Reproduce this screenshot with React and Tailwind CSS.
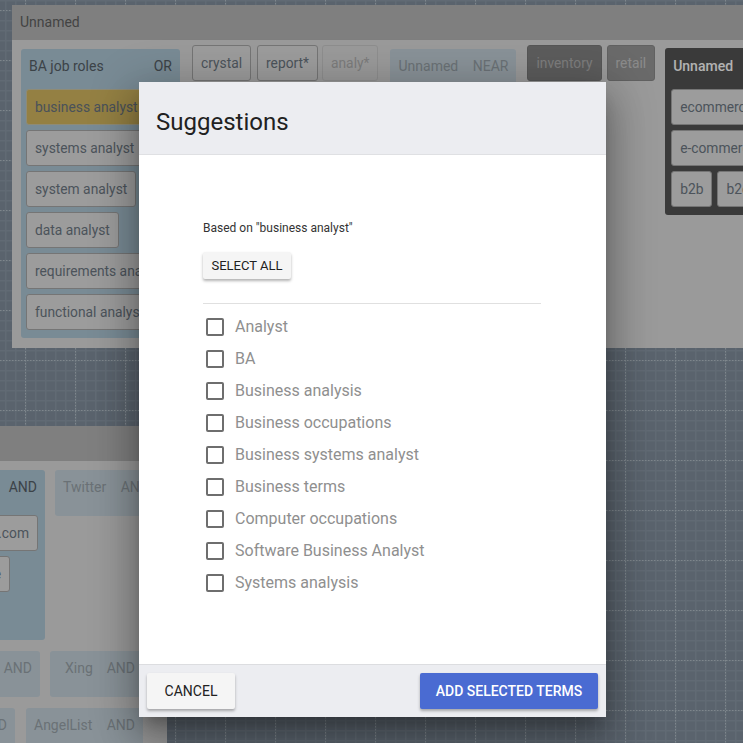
import React from 'react';

const suggestions = [
  'Analyst',
  'BA',
  'Business analysis',
  'Business occupations',
  'Business systems analyst',
  'Business terms',
  'Computer occupations',
  'Software Business Analyst',
  'Systems analysis',
];

// background grid of the canvas
function GridBackground() {
  return (
    <svg className="absolute inset-0 w-full h-full" xmlns="http://www.w3.org/2000/svg">
      <defs>
        <pattern id="minor" width="10" height="10" patternUnits="userSpaceOnUse">
          <rect x="5" y="0" width="1.5" height="10" fill="#8b99a6" />
          <rect x="0" y="0" width="10" height="1.5" fill="#8b99a6" />
        </pattern>
        <pattern id="dotsV" width="50" height="3" patternUnits="userSpaceOnUse">
          <rect x="25" y="0" width="1" height="1.5" fill="#b5c0c9" />
        </pattern>
        <pattern id="dotsH" width="3" height="50" patternUnits="userSpaceOnUse">
          <rect x="0" y="10" width="1.5" height="1" fill="#b5c0c9" />
        </pattern>
      </defs>
      <rect width="100%" height="100%" fill="#818f9c" />
      <rect width="100%" height="100%" fill="url(#minor)" />
      <rect width="100%" height="100%" fill="url(#dotsV)" />
      <rect width="100%" height="100%" fill="url(#dotsH)" />
    </svg>
  );
}

function Chip({ children, variant }) {
  let colors = 'bg-[#e0e0e0] border-[#a8a8a8] text-[#6d7883]';
  if (variant === 'yellow') colors = 'bg-[#d4b861] border-[#cdc8a8] text-[#6a7580]';
  if (variant === 'inventory') colors = 'bg-[#858585] border-[#7c7c7c] text-[#b4b4b4]';
  if (variant === 'retail') colors = 'bg-[#999999] border-[#8c8c8c] text-[#c8c8c8]';
  if (variant === 'faded') colors = 'bg-[#dddddd] border-[#cccccc] text-[#b2b2b2]';
  return (
    <div className={`h-9 px-2 border rounded-[3px] flex items-center text-[13.8px] whitespace-nowrap shrink-0 ${colors}`}>
      {children}
    </div>
  );
}

function GroupHead({ name, op, faded, white }) {
  let color = 'text-[#566067]';
  if (faded) color = 'text-[#99a3a9]';
  if (white) color = 'text-[#ffffff] font-medium';
  return (
    <div className={`flex justify-between text-sm h-[34px] items-center px-2 ${color}`}>
      <span>{name}</span>
      {op && <span>{op}</span>}
    </div>
  );
}

function FadedGroup({ name, op, className }) {
  return (
    <div className={`h-[46px] bg-[#c4d2da] rounded-[3px] ${className}`}>
      <GroupHead name={name} op={op} faded />
    </div>
  );
}

export default function App() {
  return (
    <div className="relative w-[743px] h-[743px] overflow-hidden font-['Roboto',sans-serif]">
      <GridBackground />

      {/* top panel */}
      <div className="absolute left-[12px] top-[5px] w-[900px] h-[343px] bg-[#dddddd]">
        <div className="h-[35px] bg-[#b7b7b7] px-2 pb-[2px] flex items-center text-sm text-[#616161]">Unnamed</div>
        <div className="flex pl-[9px] pt-[5px]">
          <div className="w-[159px] h-[289px] mt-1 bg-[#aec7d6] rounded-[3px] shrink-0 overflow-hidden">
            <GroupHead name="BA job roles" op="OR" />
            <div className="flex flex-col items-start gap-[5px] px-[5px] mt-[6px]">
              <Chip variant="yellow">business analyst</Chip>
              <Chip>systems analyst</Chip>
              <Chip>system analyst</Chip>
              <Chip>data analyst</Chip>
              <Chip>requirements analyst</Chip>
              <Chip>functional analyst</Chip>
            </div>
          </div>
          <div className="flex gap-[6px] ml-3 items-start">
            <Chip>crystal</Chip>
            <Chip>report*</Chip>
            <div className="-ml-[2px] mr-[1px]">
              <Chip variant="faded">analy*</Chip>
            </div>
          </div>
          <div className="w-[126px] h-[60px] mt-1 ml-[11px] bg-[#c4d2da] rounded-[3px] shrink-0">
            <GroupHead name="Unnamed" op="NEAR" faded />
          </div>
          <div className="flex gap-[5px] ml-[11px] items-start">
            <Chip variant="inventory">inventory</Chip>
            <Chip variant="retail">retail</Chip>
          </div>
          <div className="w-[200px] h-[167px] mt-[3px] ml-[10px] bg-[#535353] rounded-[3px] shrink-0">
            <div className="h-[36px] flex items-center">
              <div className="w-full">
                <GroupHead name="Unnamed" white />
              </div>
            </div>
            <div className="flex flex-wrap gap-[5px] px-[6px] mt-[5px] w-[140px]">
              <Chip>ecommerce</Chip>
              <Chip>e-commerce</Chip>
              <Chip>b2b</Chip>
              <Chip>b2c</Chip>
            </div>
          </div>
        </div>
      </div>

      {/* bottom panel, runs off the left edge */}
      <div className="absolute left-[-200px] top-[426px] w-[367px] h-[340px] bg-[#dddddd]">
        <div className="h-[35px] bg-[#b7b7b7]" />
        <div className="pl-[9px] pt-[9px] flex flex-col gap-[11px]">
          <div className="flex gap-[10px] items-start h-[170px]">
            <div className="w-[236px] h-[170px] bg-[#aec7d6] rounded-[3px] shrink-0">
              <GroupHead name="" op="AND" />
              <div className="flex flex-col items-end gap-[5px] mt-[11px] pr-[7px]">
                <Chip>companyname.com</Chip>
                <div className="mr-[28px]">
                  <Chip>name</Chip>
                </div>
              </div>
            </div>
            <FadedGroup name="Twitter" op="AND" className="w-[102px] shrink-0" />
          </div>
          <div className="flex gap-[10px]">
            <FadedGroup name="" op="AND" className="w-[231px] shrink-0" />
            <FadedGroup name="Xing" op="AND" className="w-[93px] shrink-0 pl-[7px]" />
          </div>
          <div className="flex gap-[11px]">
            <FadedGroup name="" op="AND" className="w-[206px] shrink-0" />
            <FadedGroup name="AngelList" op="AND" className="w-[117px] shrink-0" />
          </div>
        </div>
      </div>

      {/* dialog backdrop */}
      <div className="absolute inset-0 bg-black/30" />

      {/* dialog */}
      <div className="absolute left-[139px] top-[82px] w-[467px] h-[635px] flex flex-col bg-white rounded-[2px] shadow-[0_11px_15px_-7px_rgba(0,0,0,.25),0_24px_38px_3px_rgba(0,0,0,.2),0_9px_46px_8px_rgba(0,0,0,.2)]">
        <div className="h-[73px] shrink-0 bg-[#ecedf1] border-b border-[#dfe0e3] px-[17px] pt-2 flex items-center text-2xl text-[#212121]">
          Suggestions
        </div>
        <div className="flex-1 pl-[64px] pr-[65px] pt-[65px]">
          <p className="text-xs leading-[16px] text-[#333]">Based on "business analyst"</p>
          <button className="mt-[16px] h-[27px] w-[88px] bg-[#f5f5f5] rounded-[2px] text-[13px] text-[#212121] shadow-[0_2px_3px_rgba(0,0,0,.3)]">
            SELECT ALL
          </button>
          <div className="mt-[24px] border-t border-[#e0e0e0]" />
          <div className="mt-[7px] flex flex-col">
            {suggestions.map((s) => (
              <label key={s} className="h-[32px] flex items-center text-base text-[#8f8f8f]">
                <span className="w-[18px] h-[18px] ml-[3px] mr-[11px] border-2 border-[#6e6e6e] rounded-[2px]" />
                {s}
              </label>
            ))}
          </div>
        </div>
        <div className="h-[53px] shrink-0 bg-[#ecedf1] border-t border-[#dcdde0] px-2 flex items-center justify-between">
          <button className="h-9 w-[88px] bg-[#f5f5f5] rounded-[2px] text-sm text-[#212121] shadow-[0_2px_3px_rgba(0,0,0,.3)]">
            CANCEL
          </button>
          <button className="h-9 w-[178px] bg-[#4a6bd2] rounded-[2px] text-sm font-medium text-white shadow-[0_2px_3px_rgba(0,0,0,.3)]">
            ADD SELECTED TERMS
          </button>
        </div>
      </div>
    </div>
  );
}
